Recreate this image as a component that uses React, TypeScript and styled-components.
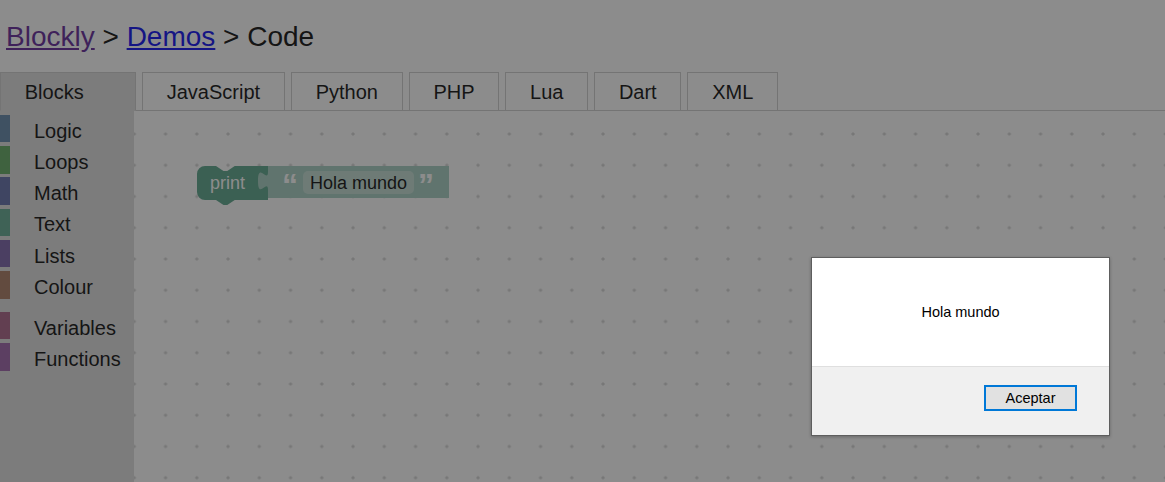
import React from "react";
import styled, { createGlobalStyle } from "styled-components";

const GlobalStyle = createGlobalStyle`
  html, body { margin: 0; padding: 0; }
  body {
    background: #fff;
    font-family: "Liberation Sans", Arial, sans-serif;
    overflow: hidden;
  }
`;

const Page = styled.div`
  position: relative;
  width: 1165px;
  height: 482px;
  display: flex;
  flex-direction: column;
  overflow: hidden;
  background: #fff;
`;

const Title = styled.h1`
  flex: none;
  margin: 21px 5px 19px 6px;
  font-size: 28px;
  line-height: 32px;
  font-weight: normal;
  color: #000;
  white-space: nowrap;
`;

const Crumb = styled.a<{ $visited?: boolean }>`
  color: ${(p) => (p.$visited ? "#5a1a95" : "#0000ee")};
  text-decoration: underline;
`;

const TabBar = styled.div`
  flex: none;
  display: flex;
  height: 39px;
`;

const Tab = styled.div<{ $on?: boolean; $width?: number }>`
  box-sizing: border-box;
  height: 39px;
  ${(p) => (p.$width ? `width: ${p.$width}px;` : "")}
  padding: 1.5px 23.75px 0;
  display: flex;
  align-items: center;
  border: 1px solid #ccc;
  border-bottom-color: ${(p) => (p.$on ? "#ddd" : "#ccc")};
  background: ${(p) => (p.$on ? "#ddd" : "transparent")};
  font-size: 20px;
  color: #000;
  white-space: nowrap;
`;

const TabGap = styled.div<{ $fill?: boolean }>`
  box-sizing: border-box;
  height: 39px;
  width: 6px;
  ${(p) => (p.$fill ? "flex: 1;" : "flex: none;")}
  border-bottom: 1px solid #ccc;
`;

const Main = styled.div`
  flex: 1;
  display: flex;
  min-height: 0;
`;

const Toolbox = styled.div`
  flex: none;
  width: 134px;
  background: #ddd;
  padding-top: 3.75px;
  display: flex;
  flex-direction: column;
`;

const ToolboxRow = styled.div<{ $color: string }>`
  box-sizing: border-box;
  height: 27.5px;
  margin-bottom: 3.75px;
  border-left: 10px solid ${(p) => p.$color};
  padding: 5px 0 0 24px;
  display: flex;
  align-items: center;
  font-size: 20px;
  color: #000;
  white-space: nowrap;
`;

const ToolboxSeparator = styled.div`
  height: 9.5px;
`;

const Workspace = styled.div`
  position: relative;
  flex: 1;
  background: #fff;
  overflow: hidden;
`;

const GridSvg = styled.svg`
  position: absolute;
  inset: 0;
  width: 100%;
  height: 100%;
`;

const BlockSvg = styled.svg`
  position: absolute;
  left: 63px;
  top: 55px;
  overflow: visible;
`;

const Backdrop = styled.div`
  position: absolute;
  inset: 0;
  background: rgba(40, 40, 40, 0.535);
`;

const Dialog = styled.div`
  position: absolute;
  left: 811px;
  top: 257px;
  width: 299px;
  height: 179px;
  box-sizing: border-box;
  border: 1px solid #5e5e5e;
  box-shadow: 0 1px 3px rgba(0, 0, 0, 0.25);
  background: #fff;
  display: flex;
  flex-direction: column;
  font-family: "Liberation Sans", Arial, sans-serif;
`;

const DialogBody = styled.div`
  height: 108px;
  display: flex;
  align-items: center;
  justify-content: center;
  font-size: 14.5px;
  color: #000;
`;

const DialogFooter = styled.div`
  flex: 1;
  background: #f0f0f0;
  border-top: 1px solid #dfdfdf;
  display: flex;
  justify-content: flex-end;
  align-items: flex-start;
  padding: 18px 32px 0 0;
`;

const DialogButton = styled.button`
  box-sizing: border-box;
  width: 93px;
  height: 26px;
  margin: 0;
  padding: 0;
  border: 2px solid #0078d7;
  background: #e1e1e1;
  font-family: "Liberation Sans", Arial, sans-serif;
  font-size: 14.5px;
  color: #000;
`;

const categories = [
  { name: "Logic", color: "#5b80a5" },
  { name: "Loops", color: "#5ba55b" },
  { name: "Math", color: "#5b67a5" },
  { name: "Text", color: "#5ba58c" },
  { name: "Lists", color: "#745ba5" },
  { name: "Colour", color: "#a5745b" },
];
const categories2 = [
  { name: "Variables", color: "#a55b80" },
  { name: "Functions", color: "#995ba5" },
];

const langTabs = ["JavaScript", "Python", "PHP", "Lua", "Dart", "XML"];

function Grid() {
  const s = 31.25;
  const c = s / 2;
  return (
    <GridSvg>
      <defs>
        <pattern
          id="blocklyGrid"
          patternUnits="userSpaceOnUse"
          width={s}
          height={s}
          x={0.3 - c}
          y={23 - c}
        >
          <path
            d={`M${c - 1.8},${c} H${c + 1.8} M${c},${c - 1.8} V${c + 1.8}`}
            stroke="#c4c4c4"
            strokeWidth="1"
          />
        </pattern>
      </defs>
      <rect width="100%" height="100%" fill="url(#blocklyGrid)" />
    </GridSvg>
  );
}

function PrintBlock() {
  const tab = "c0,12.5 -10,-10 -10,9.375 s10,-3.125 10,9.375";
  return (
    <BlockSvg width="262" height="42" viewBox="0 0 262 42">
      <path
        d="M0,8 A8,8 0 0 1 8,0 H19 l7.5,5 3.75,0 7.5,-5 H71 V34 H37.75 l-7.5,5 -3.75,0 -7.5,-5 H8 A8,8 0 0 1 0,26 Z"
        fill="#53a085"
      />
      <path d={`M71,0 V5.5 ${tab} V32 H252 V0 Z`} fill="#a2ccbe" />
      <text
        x="13"
        y="22.5"
        fontFamily="Liberation Sans, Arial, sans-serif"
        fontSize="18"
        fill="#fff"
      >
        print
      </text>
      <text
        x="85"
        y="30"
        fontFamily="Liberation Sans, Arial, sans-serif"
        fontSize="32"
        fontWeight="bold"
        fill="#fff"
      >
        “
      </text>
      <rect x="106" y="5" width="111" height="23" rx="5" fill="#fff" fillOpacity="0.3" />
      <text
        x="113"
        y="22.5"
        fontFamily="Liberation Sans, Arial, sans-serif"
        fontSize="18"
        fill="#000"
      >
        Hola mundo
      </text>
      <text
        x="221"
        y="30"
        fontFamily="Liberation Sans, Arial, sans-serif"
        fontSize="32"
        fontWeight="bold"
        fill="#fff"
      >
        ”
      </text>
    </BlockSvg>
  );
}

export default function App() {
  return (
    <>
      <GlobalStyle />
      <Page>
        <Title>
          <Crumb $visited href="#">Blockly</Crumb> &gt; <Crumb href="#">Demos</Crumb> &gt; Code
        </Title>
        <TabBar>
          <Tab $on $width={136}>Blocks</Tab>
          {langTabs.map((t) => (
            <React.Fragment key={t}>
              <TabGap />
              <Tab>{t}</Tab>
            </React.Fragment>
          ))}
          <TabGap $fill />
        </TabBar>
        <Main>
          <Toolbox>
            {categories.map((c) => (
              <ToolboxRow key={c.name} $color={c.color}>
                {c.name}
              </ToolboxRow>
            ))}
            <ToolboxSeparator />
            {categories2.map((c) => (
              <ToolboxRow key={c.name} $color={c.color}>
                {c.name}
              </ToolboxRow>
            ))}
          </Toolbox>
          <Workspace>
            <Grid />
            <PrintBlock />
          </Workspace>
        </Main>
        <Backdrop />
        <Dialog role="dialog">
          <DialogBody>Hola mundo</DialogBody>
          <DialogFooter>
            <DialogButton>Aceptar</DialogButton>
          </DialogFooter>
        </Dialog>
      </Page>
    </>
  );
}
